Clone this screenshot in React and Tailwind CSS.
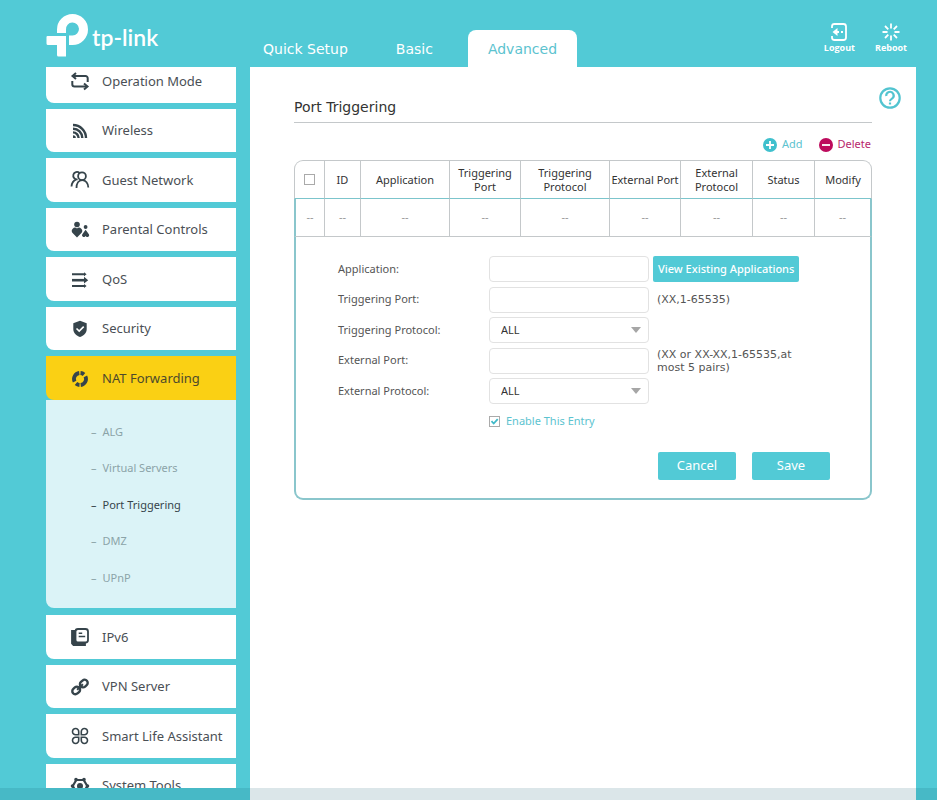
const menuTop = [
  { name: "Operation Mode", icon: OperationIcon },
  { name: "Wireless", icon: WirelessIcon },
  { name: "Guest Network", icon: GuestIcon },
  { name: "Parental Controls", icon: ParentalIcon },
  { name: "QoS", icon: QosIcon },
  { name: "Security", icon: SecurityIcon },
  { name: "NAT Forwarding", icon: NatIcon, active: true },
];

const subMenu = ["ALG", "Virtual Servers", "Port Triggering", "DMZ", "UPnP"];

const menuBottom = [
  { name: "IPv6", icon: Ipv6Icon },
  { name: "VPN Server", icon: VpnIcon },
  { name: "Smart Life Assistant", icon: SmartIcon },
  { name: "System Tools", icon: SystemIcon },
];

const columns = [
  { label: "ID", width: 36 },
  { label: "Application", width: 89 },
  { label: "Triggering Port", width: 71 },
  { label: "Triggering Protocol", width: 89 },
  { label: "External Port", width: 71, nowrap: true },
  { label: "External Protocol", width: 72 },
  { label: "Status", width: 62 },
  { label: "Modify", width: 57 },
];

function Icon({ children }) {
  return (
    <svg
      viewBox="0 0 20 20"
      className="size-5 shrink-0"
      fill="none"
      stroke="currentColor"
      strokeWidth="1.8"
      aria-hidden="true"
    >
      {children}
    </svg>
  );
}

function OperationIcon() {
  return (
    <Icon>
      <path
        d="M4 5h11.500a2.200 2.200 0 0 1 2.200 2.200V11M16 15.500H4.500a2.200 2.200 0 0 1-2.200-2.200V10"
        strokeWidth="2"
      />
      <path d="M6 2L2.500 5 6 8M14 12.500l3.500 3-3.500 3" strokeWidth="2" />
    </Icon>
  );
}

function WirelessIcon() {
  return (
    <Icon>
      <path
        d="M3 4A13 13 0 0 1 16 17M3 7.700A9.300 9.300 0 0 1 12.300 17M3 11.400A5.600 5.600 0 0 1 8.600 17"
        strokeWidth="2.400"
      />
      <path d="M3 14.200A2.800 2.800 0 0 1 5.800 17H3z" fill="currentColor" stroke="none" />
    </Icon>
  );
}

function GuestIcon() {
  return (
    <Icon>
      <circle cx="12" cy="6.200" r="3.900" />
      <path d="M7.600 9.300A3.700 3.700 0 1 1 9.500 3M1.500 16.500c.2-3.500 1.800-6 4.800-7.200M6.500 18c0-4.500 2.200-7.900 5.700-7.900s6.100 3.200 6.100 7.400" />
    </Icon>
  );
}

function ParentalIcon() {
  return (
    <Icon>
      <g fill="currentColor" stroke="none">
        <circle cx="7" cy="4.500" r="2.800" />
        <path d="M7 17.500L2.600 13a3.200 3.200 0 0 1 4.400-4.600A3.200 3.200 0 0 1 11.400 13z" />
        <circle cx="15.600" cy="7" r="1.900" />
        <path d="M15.600 9.800l3.300 4.400a1.900 1.900 0 0 1-2.600 2.600l-.7-.8-.7.8a1.900 1.900 0 0 1-2.600-2.600z" />
      </g>
    </Icon>
  );
}

function QosIcon() {
  return (
    <Icon>
      <path d="M2 4.300h13M2 16h13" strokeWidth="2" />
      <path d="M2 10.200h14" strokeWidth="2.600" />
      <g fill="currentColor" stroke="none">
        <path d="M14 2.300l2.600 2-2.600 2zM14 6.800l4.200 3.400-4.200 3.400zM14 14l2.600 2-2.600 2z" />
      </g>
    </Icon>
  );
}

function SecurityIcon() {
  return (
    <Icon>
      <path
        d="M10 1.800l6.700 2.500v5.700c0 4-3 6.700-6.700 8-3.700-1.300-6.700-4-6.700-8V4.300z"
        fill="currentColor"
        stroke="none"
      />
      <path d="M6.500 9.500l2.700 2.600 4.500-4.500" stroke="white" strokeWidth="1.600" />
    </Icon>
  );
}

function NatIcon() {
  return (
    <Icon>
      <path
        d="M9.300 4A6 6 0 0 0 4.600 12.600M6 14.500A6 6 0 0 0 9.500 16M10.700 16A6 6 0 0 0 15.400 7.400M14 5.500A6 6 0 0 0 10.500 4"
        strokeWidth="3.800"
      />
    </Icon>
  );
}

function Ipv6Icon() {
  return (
    <Icon>
      <path d="M5 4H2v12.500L3.500 18H15v-2" fill="currentColor" />
      <rect x="5.500" y="2" width="12.500" height="13.500" rx="2.500" fill="white" />
      <path d="M8.700 6.300h3.500M8.700 9.500h6.500" strokeWidth="1.600" />
    </Icon>
  );
}

function VpnIcon() {
  return (
    <Icon>
      <g transform="rotate(-42 10 10)" strokeWidth="2.400">
        <rect x="0.700" y="6.900" width="8.300" height="6.200" rx="3.100" />
        <rect x="11" y="6.900" width="8.300" height="6.200" rx="3.100" />
        <path d="M6 10h8" strokeWidth="2" />
      </g>
    </Icon>
  );
}

function SmartIcon() {
  return (
    <Icon>
      <path
        d="M8.700 8.700H5.700A3.100 3.100 0 1 1 8.700 5.700zM11.300 8.700V5.700A3.100 3.100 0 1 1 14.300 8.700zM8.700 11.300v3A3.100 3.100 0 1 1 5.700 11.300zM11.300 11.300h3a3.100 3.100 0 1 1-3 3z"
        strokeWidth="1.600"
      />
    </Icon>
  );
}

function SystemIcon() {
  return (
    <Icon>
      <path d="M6.300 4h7.400l3.600 6-3.600 6H6.300l-3.600-6z" strokeWidth="2.200" strokeLinejoin="round" />
      <path
        d="M6 3.500v.1M14 3.500v.1M17.500 10v.1M2.500 10v.1M6 16.500v.1M14 16.500v.1"
        strokeWidth="3.600"
        strokeLinecap="round"
      />
      <circle cx="10" cy="10" r="3" fill="currentColor" stroke="none" />
    </Icon>
  );
}

function MenuItem({ item }) {
  const ItemIcon = item.icon;

  return (
    <li className="flex-1 flex">
      <a
        href="#"
        className={`flex-1 flex items-center gap-3 pt-px pl-6 rounded-bl-lg text-[13px] whitespace-nowrap ${
          item.active ? "bg-[#fad014] text-[#4d4a2c]" : "bg-white text-[#4a4f55]"
        }`}
      >
        <span className="text-[#36444b]">
          <ItemIcon />
        </span>
        {item.name}
      </a>
    </li>
  );
}

function Sidebar() {
  return (
    <nav className="w-[190px] shrink-0 overflow-hidden mb-3">
      <ul className="-mt-2 h-[341px] flex flex-col gap-[6px]">
        {menuTop.map((item) => (
          <MenuItem key={item.name} item={item} />
        ))}
      </ul>

      <ul className="h-[208px] mb-[7px] pt-[14px] pb-3 flex flex-col bg-[#dbf3f7] rounded-bl-lg text-[11px]">
        {subMenu.map((name) => (
          <li key={name} className="flex-1 flex items-center pl-[45px]">
            <a
              href="#"
              className={`flex gap-[6px] ${
                name === "Port Triggering" ? "text-[#36444b]" : "text-[#8ba3a8]"
              }`}
            >
              <span>–</span>
              {name}
            </a>
          </li>
        ))}
      </ul>

      <ul className="h-[192px] flex flex-col gap-[6px]">
        {menuBottom.map((item) => (
          <MenuItem key={item.name} item={item} />
        ))}
      </ul>
    </nav>
  );
}

function Header() {
  return (
    <header className="h-[67px] flex justify-between text-white">
      <div className="flex">
        <a href="#" className="w-[193px] pt-[13px] flex gap-[3px]" aria-label="tp-link">
          <svg viewBox="0 0 43 44" className="w-[43px] h-11" fill="white" aria-hidden="true">
            <path d="M11 20V16.500A15.500 15.500 0 1 1 26.500 32H23V22.500h3.500a6.500 6.500 0 1 0-6.500-6V20z" />
            <path d="M1.500 23H20v20.500h-7.500q-1.500 0-1.500-1.500V32H2q-1.500 0-1.500-1.500V24q0-1 1-1z" />
          </svg>
          <span className="font-['Lato'] font-semibold text-[23px] leading-[48px]">tp-link</span>
        </a>

        <nav className="flex items-end font-['DejaVu_Sans'] text-[14px]">
          <a href="#" className="h-[37px] pt-[2px] px-6 flex items-center">
            Quick Setup
          </a>
          <a href="#" className="h-[37px] pt-[2px] px-6 flex items-center">
            Basic
          </a>
          <a
            href="#"
            className="h-[37px] pt-[2px] ml-[11px] px-5 flex items-center bg-white rounded-t-lg text-[#5cc3cf]"
          >
            Advanced
          </a>
        </nav>
      </div>

      <div className="flex gap-5 pt-[22px] pr-[9px] font-['Open_Sans'] font-bold text-[9px] leading-3">
        <button type="button" className="flex flex-col items-center">
          <Icon>
            <path d="M3 6V4.500a2.500 2.500 0 0 1 2.500-2.500h9A2.500 2.500 0 0 1 17 4.500v11a2.500 2.500 0 0 1-2.500 2.500h-9A2.500 2.500 0 0 1 3 15.500V14M10 10H5M12 10h2" />
            <path d="M8.500 6L3.500 10l5 4z" fill="currentColor" stroke="none" />
          </Icon>
          Logout
        </button>
        <button type="button" className="flex flex-col items-center">
          <Icon>
            <path d="M10 1.500v5M10 13.500v5M1.500 10h5M13.500 10h5M4 4l3.300 3.300M12.700 12.700L16 16M4 16l3.300-3.300M12.700 7.300L16 4" />
          </Icon>
          Reboot
        </button>
      </div>
    </header>
  );
}

function FormRow({ id, label, children }) {
  return (
    <div className="h-[26px] flex items-center">
      <label htmlFor={id} className="w-[151px] shrink-0">
        {label}
      </label>
      {children}
    </div>
  );
}

function TextField({ id }) {
  return (
    <input
      id={id}
      type="text"
      className="w-40 h-[26px] shrink-0 px-3 bg-white border border-[#e2e2e2] rounded focus:outline-none"
    />
  );
}

function Hint({ children }) {
  return <span className="ml-2 w-36 font-['DejaVu_Sans'] leading-[13px]">{children}</span>;
}

function ProtocolSelect({ id }) {
  return (
    <div className="relative w-40 shrink-0">
      <select
        id={id}
        className="w-full h-[26px] pl-[11px] bg-white border border-[#e2e2e2] rounded appearance-none text-[#333]"
      >
        <option>ALL</option>
        <option>TCP</option>
        <option>UDP</option>
      </select>
      <svg
        viewBox="0 0 10 6"
        className="absolute right-2 top-[10px] w-[10px] h-[6px] pointer-events-none"
        fill="#a6a6a6"
        aria-hidden="true"
      >
        <path d="M0 0h10L5 6z" />
      </svg>
    </div>
  );
}

function EntryForm() {
  return (
    <form className="pt-[19px] pl-[42px] pr-10 pb-[18px] text-left text-[#555]">
      <div className="h-[148px] flex flex-col justify-between">
        <FormRow id="application" label="Application:">
          <TextField id="application" />
          <button
            type="button"
            className="ml-1 px-[5px] h-[26px] bg-[#52cad6] text-white rounded-xs whitespace-nowrap font-medium"
          >
            View Existing Applications
          </button>
        </FormRow>
        <FormRow id="triggeringPort" label="Triggering Port:">
          <TextField id="triggeringPort" />
          <Hint>(XX,1-65535)</Hint>
        </FormRow>
        <FormRow id="triggeringProtocol" label="Triggering Protocol:">
          <ProtocolSelect id="triggeringProtocol" />
        </FormRow>
        <FormRow id="externalPort" label="External Port:">
          <TextField id="externalPort" />
          <Hint>(XX or XX-XX,1-65535,at most 5 pairs)</Hint>
        </FormRow>
        <FormRow id="externalProtocol" label="External Protocol:">
          <ProtocolSelect id="externalProtocol" />
        </FormRow>
      </div>

      <label className="mt-2 pl-[151px] h-[18px] flex items-center gap-[6px] text-[#5cc3cf]">
        <span className="relative flex">
          <input
            type="checkbox"
            defaultChecked
            className="peer size-[11px] appearance-none bg-white border border-[#aaa]"
          />
          <svg
            viewBox="0 0 11 11"
            className="absolute inset-0 size-[11px] hidden peer-checked:block pointer-events-none"
            fill="none"
            stroke="#3fb9c8"
            strokeWidth="1.800"
            aria-hidden="true"
          >
            <path d="M2.500 5.200l2.200 2.300 4-4.300" />
          </svg>
        </span>
        Enable This Entry
      </label>

      <div className="mt-[22px] flex justify-end gap-4 text-[13px] text-white">
        <button type="button" className="w-[78px] h-7 bg-[#52cad6] rounded-xs">
          Cancel
        </button>
        <button type="button" className="w-[78px] h-7 bg-[#52cad6] rounded-xs">
          Save
        </button>
      </div>
    </form>
  );
}

function PortTable() {
  return (
    <table className="mt-[7px] w-full table-fixed border-separate border-spacing-0 text-[11px] text-center">
      <colgroup>
        <col style={{ width: 31 }} />
        {columns.map((col) => (
          <col key={col.label} style={{ width: col.width }} />
        ))}
      </colgroup>
      <thead>
        <tr className="h-[39px] text-[#333]">
          <th className="border-x border-t border-[#c4c8ca] border-b border-b-[#7cc5cc] rounded-tl-[9px]">
            <input
              type="checkbox"
              aria-label="Select all"
              className="block mx-auto size-[11px] appearance-none bg-white border border-[#aaa]"
            />
          </th>
          {columns.map((col) => (
            <th
              key={col.label}
              className={`font-normal leading-[14px] border-r border-t border-[#c4c8ca] border-b border-b-[#7cc5cc] last:rounded-tr-[9px] ${
                col.nowrap ? "whitespace-nowrap" : ""
              }`}
            >
              {col.label}
            </th>
          ))}
        </tr>
      </thead>
      <tbody>
        <tr className="h-[38px] text-[#999]">
          <td className="border-l-2 border-l-[#8ac6cc] border-r border-r-[#c4c8ca] border-b border-b-[#c4c8ca]">
            --
          </td>
          {columns.map((col) => (
            <td
              key={col.label}
              className="border-r border-r-[#c4c8ca] last:border-r-2 last:border-r-[#8ac6cc] border-b border-b-[#c4c8ca]"
            >
              --
            </td>
          ))}
        </tr>
        <tr>
          <td colSpan={9} className="border-x-2 border-b-2 border-[#8ac6cc] rounded-b-[9px]">
            <EntryForm />
          </td>
        </tr>
      </tbody>
    </table>
  );
}

function App() {
  return (
    <div className="h-screen flex flex-col pl-[46px] pr-[21px] overflow-hidden bg-[#52cad6] font-['Noto_Sans',sans-serif]">
      <Header />

      <div className="flex-1 min-h-0 flex gap-[14px]">
        <Sidebar />

        <main className="relative flex-1 bg-white px-11 pt-[30px]">
          <button
            type="button"
            aria-label="Help"
            className="absolute top-5 right-[15px] text-[#52c4d0]"
          >
            <svg
              viewBox="0 0 22 22"
              className="size-[22px]"
              fill="none"
              stroke="currentColor"
              strokeWidth="2.200"
              aria-hidden="true"
            >
              <circle cx="11" cy="11" r="9.700" />
              <path d="M7.300 9A3.700 3.700 0 1 1 13 11.600c-1.300.8-2 1.300-2 2.600" />
              <path d="M11 15.500v2" />
            </svg>
          </button>

          <h1 className="h-[26px] font-['DejaVu_Sans'] text-[14px] leading-5 text-[#333] border-b border-[#c4c8ca]">
            Port Triggering
          </h1>

          <div className="mt-[13px] h-[17px] pr-px flex justify-end gap-4 text-[11px]">
            <button type="button" className="flex items-center gap-[5px] text-[#5cc3cf]">
              <svg viewBox="0 0 14 14" className="size-[14px]" aria-hidden="true">
                <circle cx="7" cy="7" r="7" fill="#3fc0cd" />
                <path d="M7 3v8M3 7h8" stroke="white" strokeWidth="1.800" />
              </svg>
              Add
            </button>
            <button type="button" className="flex items-center gap-[5px] text-[#b8266c]">
              <svg viewBox="0 0 14 14" className="size-[14px]" aria-hidden="true">
                <circle cx="7" cy="7" r="7" fill="#bd0a5c" />
                <path d="M3 7h8" stroke="white" strokeWidth="1.800" />
              </svg>
              Delete
            </button>
          </div>

          <PortTable />
        </main>
      </div>

      <div className="fixed bottom-0 inset-x-0 h-3 bg-[#0f586c]/15" />
    </div>
  );
}

export default App;
